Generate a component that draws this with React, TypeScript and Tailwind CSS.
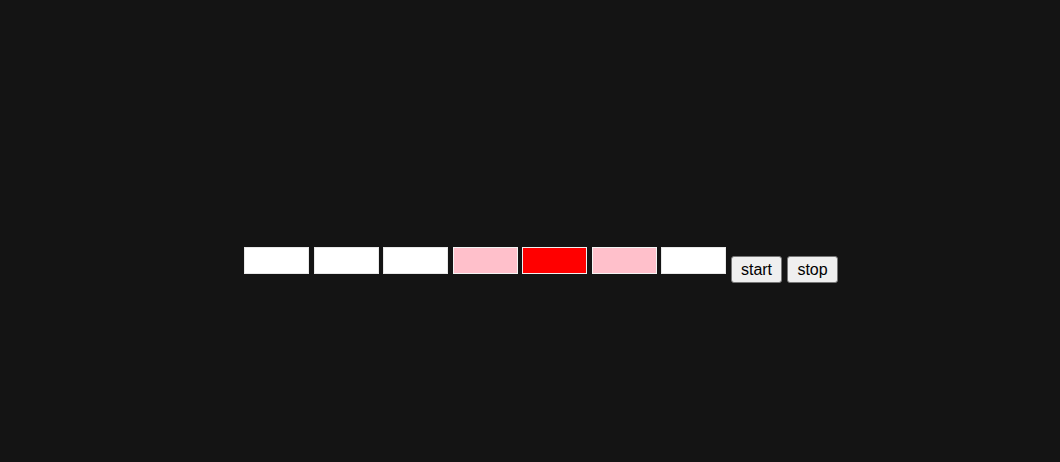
import React, { useState } from 'react';

// Colours of the seven cells, left to right
const cells = ['white', 'white', 'white', 'pink', 'red', 'pink', 'white'];

const colorClass: Record<string, string> = {
  white: 'bg-white border-[#e8e8e8]',
  pink: 'bg-[#ffc0cb] border-[#f4f4f4]',
  red: 'bg-[#ff0000] border-[#f0f0f0]',
};

const App: React.FC = () => {
  const [running, setRunning] = useState(false);

  return (
    <div
      className="w-full h-[462px] bg-[#141414] pl-[244px] pt-[247px]"
      style={{ fontFamily: '"Liberation Sans", Arial, sans-serif' }}
    >
      <div className="flex items-start">
        <div className="flex gap-[4.5px]">
          {cells.map((c, i) => (
            <div key={i} className={`w-[65px] h-[27px] border ${colorClass[c]}`} />
          ))}
        </div>
        <button
          type="button"
          onClick={() => setRunning(true)}
          className="ml-[5px] mt-[9px] h-[27px] w-[51px] bg-[#efefef] border border-[#767676] rounded-[3px] text-[16px] leading-none text-black"
        >
          start
        </button>
        <button
          type="button"
          onClick={() => setRunning(false)}
          className="ml-[5px] mt-[9px] h-[27px] w-[51px] bg-[#efefef] border border-[#767676] rounded-[3px] text-[16px] leading-none text-black"
          data-running={running}
        >
          stop
        </button>
      </div>
    </div>
  );
};

export default App;
